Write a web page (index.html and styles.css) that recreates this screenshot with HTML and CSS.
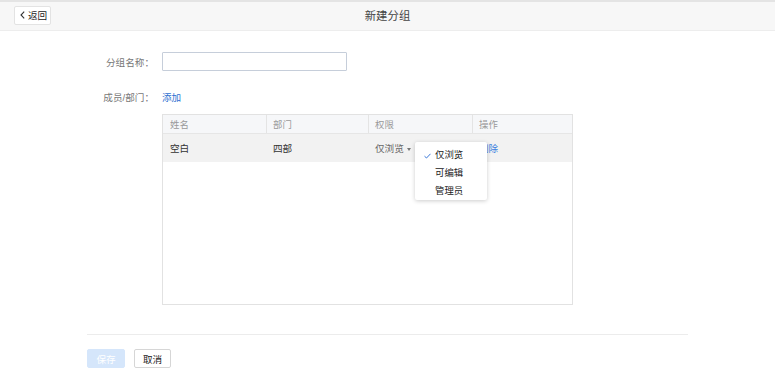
FILE: index.html
```html
<!DOCTYPE html>
<html lang="zh">
<head>
<meta charset="utf-8">
<title>新建分组</title>
<link rel="stylesheet" href="styles.css">
</head>
<body>
<div class="topbar">
  <div class="left">
    <button class="back"><svg class="chev" width="5" height="8" viewBox="0 0 5 8"><path d="M4.2 0.6 L1 4 L4.2 7.4" fill="none" stroke="#333" stroke-width="1.1"/></svg><span>返回</span></button>
  </div>
  <div class="title">新建分组</div>
  <div class="right"></div>
</div>

<div class="main">
  <div class="form">
    <div class="row row-name">
      <div class="label">分组名称：</div>
      <div class="field"><input class="input" type="text"></div>
    </div>
    <div class="row row-members">
      <div class="label">成员/部门：</div>
      <div class="field"><a class="link">添加</a></div>
    </div>
    <div class="row row-table">
      <div class="label"></div>
      <div class="field">
        <div class="table">
          <div class="thead">
            <div class="th">姓名</div>
            <div class="th sep">部门</div>
            <div class="th sep">权限</div>
            <div class="th sep">操作</div>
          </div>
          <div class="tr">
            <div class="td">空白</div>
            <div class="td">四部</div>
            <div class="td perm">
              <span class="perm-val">仅浏览</span><span class="caret"></span>
              <div class="menu">
                <div class="item checked"><svg class="check" width="7" height="6" viewBox="0 0 7 6"><path d="M0.5 3.2 L2.5 5 L6.5 0.8" fill="none" stroke="#3a78d8" stroke-width="1"/></svg>仅浏览</div>
                <div class="item">可编辑</div>
                <div class="item">管理员</div>
              </div>
            </div>
            <div class="td"><a class="link del">删除</a></div>
          </div>
        </div>
      </div>
    </div>
  </div>
  <div class="divider"></div>
  <div class="actions">
    <button class="btn primary">保存</button>
    <button class="btn">取消</button>
  </div>
</div>
</body>
</html>
```

FILE: styles.css
```css
* { box-sizing: border-box; }
html, body { margin: 0; padding: 0; background: #fff; }
body {
  font-family: "Liberation Sans", "Noto Sans CJK SC", sans-serif;
  font-size: 9.6px;
  color: #333;
}
.topbar {
  height: 31px;
  border-top: 2px solid #e4e4e4;
  border-bottom: 1px solid #ededed;
  background: #f7f7f7;
  display: grid;
  grid-template-columns: 1fr auto 1fr;
  align-items: center;
}
.left { padding-left: 14px; }
.back {
  display: flex;
  align-items: center;
  gap: 3px;
  height: 19px;
  width: 37px;
  padding: 0 0 0 5px;
  border: 1px solid #e3e3e3;
  border-radius: 2px;
  background: #fff;
  font-family: inherit;
  font-size: 9.6px;
  color: #222;
  margin-top: -2px;
}
.title {
  font-size: 11.4px;
  color: #444;
  margin-top: -2px;
}
.main { padding-left: 87px; }
.form { width: 486px; }
.row {
  display: grid;
  grid-template-columns: 67px 1fr;
  column-gap: 8px;
  align-items: center;
}
.label { text-align: right; color: #777; font-size: 9.6px; }
.row-name { margin-top: 21px; height: 19px; }
.row-members { margin-top: 19px; height: 14px; }
.row-table { margin-top: 10px; align-items: start; }
.input {
  display: block;
  width: 185px;
  height: 19px;
  border: 1px solid #c6ceda;
  border-radius: 1px;
  background: #fff;
  padding: 0 4px;
  outline: none;
}
.link { color: #2f6fd0; cursor: pointer; }
.table {
  width: 411px;
  height: 191px;
  border: 1px solid #e2e2e2;
}
.thead, .tr {
  display: grid;
  grid-template-columns: 103px 102px 104px 1fr;
}
.thead {
  height: 19px;
  background: #f6f7f9;
  border-bottom: 1px solid #e6e6e6;
  align-items: center;
}
.th {
  color: #999;
  padding-left: 7px;
  position: relative;
  font-size: 9.4px;
}
.th.sep::before {
  content: "";
  position: absolute;
  left: 0;
  top: -2px;
  bottom: -2px;
  border-left: 1px solid #e4e4e4;
}
.tr {
  height: 28px;
  background: #f2f2f2;
  align-items: center;
}
.td { padding-left: 7px; color: #333; }
.perm { position: relative; color: #666; }
.caret {
  display: inline-block;
  margin-left: 3px;
  border-left: 2.5px solid transparent;
  border-right: 2.5px solid transparent;
  border-top: 3.5px solid #777;
  vertical-align: 1px;
}
.del { color: #3a7fe0; }
.menu {
  position: absolute;
  left: 47px;
  top: 1px;
  width: 72px;
  height: 58px;
  background: #fff;
  border-radius: 2px;
  box-shadow: 0 1px 4px rgba(0,0,0,0.2);
  padding-top: 4px;
  z-index: 2;
}
.item {
  height: 18px;
  line-height: 18px;
  padding-left: 20px;
  color: #222;
  position: relative;
  font-size: 9.4px;
}
.check { position: absolute; left: 9px; top: 7px; }
.divider {
  width: 601px;
  height: 1px;
  background: #ececec;
  margin-top: 29px;
}
.actions {
  display: flex;
  gap: 9px;
  margin-top: 14px;
}
.btn {
  width: 37px;
  height: 19px;
  padding: 0;
  border: 1px solid #d6d6d6;
  border-radius: 2px;
  background: #fff;
  font-family: inherit;
  font-size: 9.6px;
  color: #222;
}
.btn.primary {
  width: 38px;
  background: #d5e6fb;
  border-color: #d5e6fb;
  color: #fff;
}
```
